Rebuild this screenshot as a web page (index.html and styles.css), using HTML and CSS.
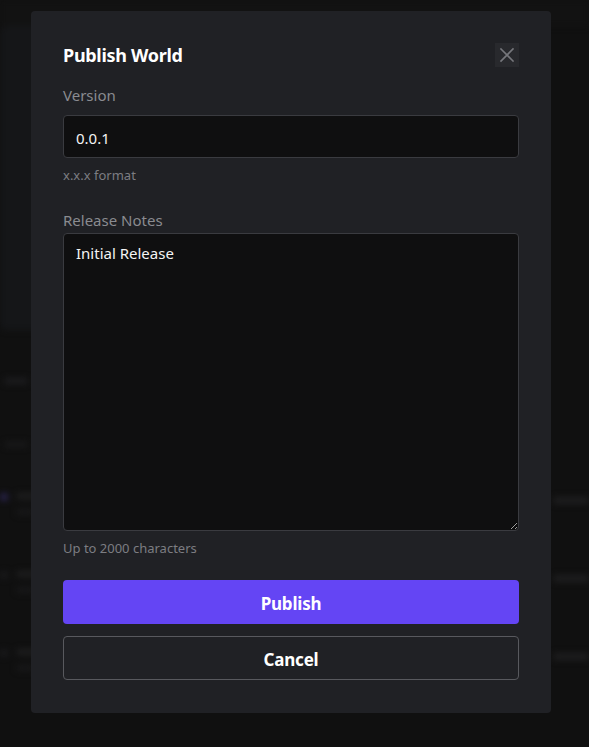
FILE: index.html
```html
<!DOCTYPE html>
<html lang="en">
<head>
<meta charset="utf-8">
<title>Publish World</title>
<link rel="stylesheet" href="styles.css">
</head>
<body>
<div class="page">
  <div class="backdrop" aria-hidden="true">
    <div class="bg-top"></div>
    <div class="bg-panel"></div>
    <div class="bg-heading"></div>
    <div class="bg-sub"></div>
    <div class="bg-list">
      <div class="bg-row"><span class="bg-dot purple"></span><span class="bg-lines"><span class="bg-line"></span><span class="bg-line short"></span></span><span class="bg-right"></span></div>
      <div class="bg-row"><span class="bg-dot"></span><span class="bg-lines"><span class="bg-line"></span><span class="bg-line short"></span></span><span class="bg-right"></span></div>
      <div class="bg-row"><span class="bg-dot"></span><span class="bg-lines"><span class="bg-line"></span><span class="bg-line short"></span></span><span class="bg-right"></span></div>
    </div>
  </div>

  <div class="overlay">
    <div class="modal" role="dialog" aria-labelledby="modal-title">
      <div class="modal-header">
        <h2 id="modal-title" class="modal-title">Publish World</h2>
        <button class="close-btn" type="button" aria-label="Close">
          <svg width="16" height="16" viewBox="0 0 16 16" fill="none" stroke="currentColor" stroke-width="1.6" stroke-linecap="square">
            <path d="M2 2 L14 14 M14 2 L2 14"/>
          </svg>
        </button>
      </div>

      <label class="field-label label-version" for="version">Version</label>
      <input id="version" class="text-input" type="text" value="0.0.1">
      <div class="helper">x.x.x format</div>

      <label class="field-label label-notes" for="notes">Release Notes</label>
      <textarea id="notes" class="text-area">Initial Release</textarea>
      <div class="helper">Up to 2000 characters</div>

      <div class="actions">
        <button class="btn btn-primary" type="button">Publish</button>
        <button class="btn btn-secondary" type="button">Cancel</button>
      </div>
    </div>
  </div>
</div>
</body>
</html>
```

FILE: styles.css
```css
* { box-sizing: border-box; }

html, body {
  margin: 0;
  padding: 0;
  background: #101010;
}

body {
  font-family: "Noto Sans", "Open Sans", "DejaVu Sans", sans-serif;
  color: #ffffff;
  width: 589px;
  height: 747px;
  overflow: hidden;
}

.page {
  position: relative;
  width: 589px;
  height: 747px;
}

/* faint, blurred page behind the dialog */
.backdrop {
  display: flex;
  flex-direction: column;
  height: 100%;
  filter: blur(3px);
}

.bg-top {
  height: 26px;
  background: #121212;
}

.bg-panel {
  width: 300px;
  height: 304px;
  background: #151618;
  border-radius: 6px;
}

.bg-heading {
  width: 24px;
  height: 6px;
  background: #1d1d1f;
  margin: 48px 0 0 4px;
  border-radius: 3px;
}

.bg-sub {
  width: 24px;
  height: 5px;
  background: #1a1a1b;
  margin: 58px 0 0 4px;
  border-radius: 3px;
}

.bg-list {
  display: flex;
  flex-direction: column;
  gap: 58px;
  margin-top: 46px;
}

.bg-row {
  display: flex;
  align-items: flex-start;
  gap: 8px;
  height: 20px;
}

.bg-dot {
  width: 8px;
  height: 8px;
  border-radius: 50%;
  background: #1a1a1c;
  flex: none;
}
.bg-dot.purple { background: #2a2450; }

.bg-lines {
  display: flex;
  flex-direction: column;
  gap: 10px;
  width: 30px;
}

.bg-line {
  display: block;
  height: 6px;
  background: #1e1e1f;
  border-radius: 3px;
}
.bg-line.short { width: 18px; background: #181819; }

.bg-right {
  margin-left: auto;
  margin-top: 4px;
  width: 36px;
  height: 7px;
  background: #1e1e1f;
  border-radius: 3px;
}

/* overlay + dialog */
.overlay {
  position: absolute;
  inset: 0;
  display: flex;
  justify-content: flex-start;
  align-items: flex-start;
  padding: 11px 0 0 31px;
}

.modal {
  width: 520px;
  height: 702px;
  background: #202125;
  border-radius: 4px;
  padding: 32px 32px 33px;
  display: flex;
  flex-direction: column;
}

.modal-header {
  display: flex;
  align-items: center;
  justify-content: space-between;
  height: 24px;
}

.modal-title {
  margin: 0;
  font-size: 18px;
  font-weight: 700;
  line-height: 24px;
  color: #ffffff;
  letter-spacing: -0.3px;
}

.close-btn {
  width: 24px;
  height: 24px;
  padding: 0;
  border: none;
  background: #28292d;
  color: #76777c;
  display: flex;
  align-items: center;
  justify-content: center;
  border-radius: 0;
  font: inherit;
}

.field-label {
  display: block;
  font-size: 15px;
  line-height: 20px;
  color: #8a8b90;
}
.label-version { margin: 18px 0 10px; }
.label-notes { margin: 26px 0 3px; }

.text-input,
.text-area {
  display: block;
  width: 100%;
  background: #0f0f10;
  border: 1px solid #3a3b40;
  border-radius: 4px;
  color: #f4f4f4;
  font-family: inherit;
  font-size: 15px;
  line-height: 20px;
  outline: none;
  margin: 0;
}

.text-input {
  height: 43px;
  padding: 12px 12px 9px;
}

.text-area {
  height: 298px;
  padding: 9px 12px;
  resize: vertical;
}

.helper {
  margin-top: 8px;
  font-size: 13px;
  line-height: 18px;
  color: #7c7d82;
}

.actions {
  display: flex;
  flex-direction: column;
  gap: 12px;
  margin-top: 23px;
}

.btn {
  width: 100%;
  height: 44px;
  padding: 2px 0 0;
  border-radius: 4px;
  font-family: inherit;
  font-size: 17px;
  font-weight: 700;
  color: #ffffff;
  cursor: pointer;
  letter-spacing: -0.2px;
}

.btn-primary {
  background: #6445f4;
  border: none;
}

.btn-secondary {
  background: transparent;
  border: 1px solid #58595e;
}
```
